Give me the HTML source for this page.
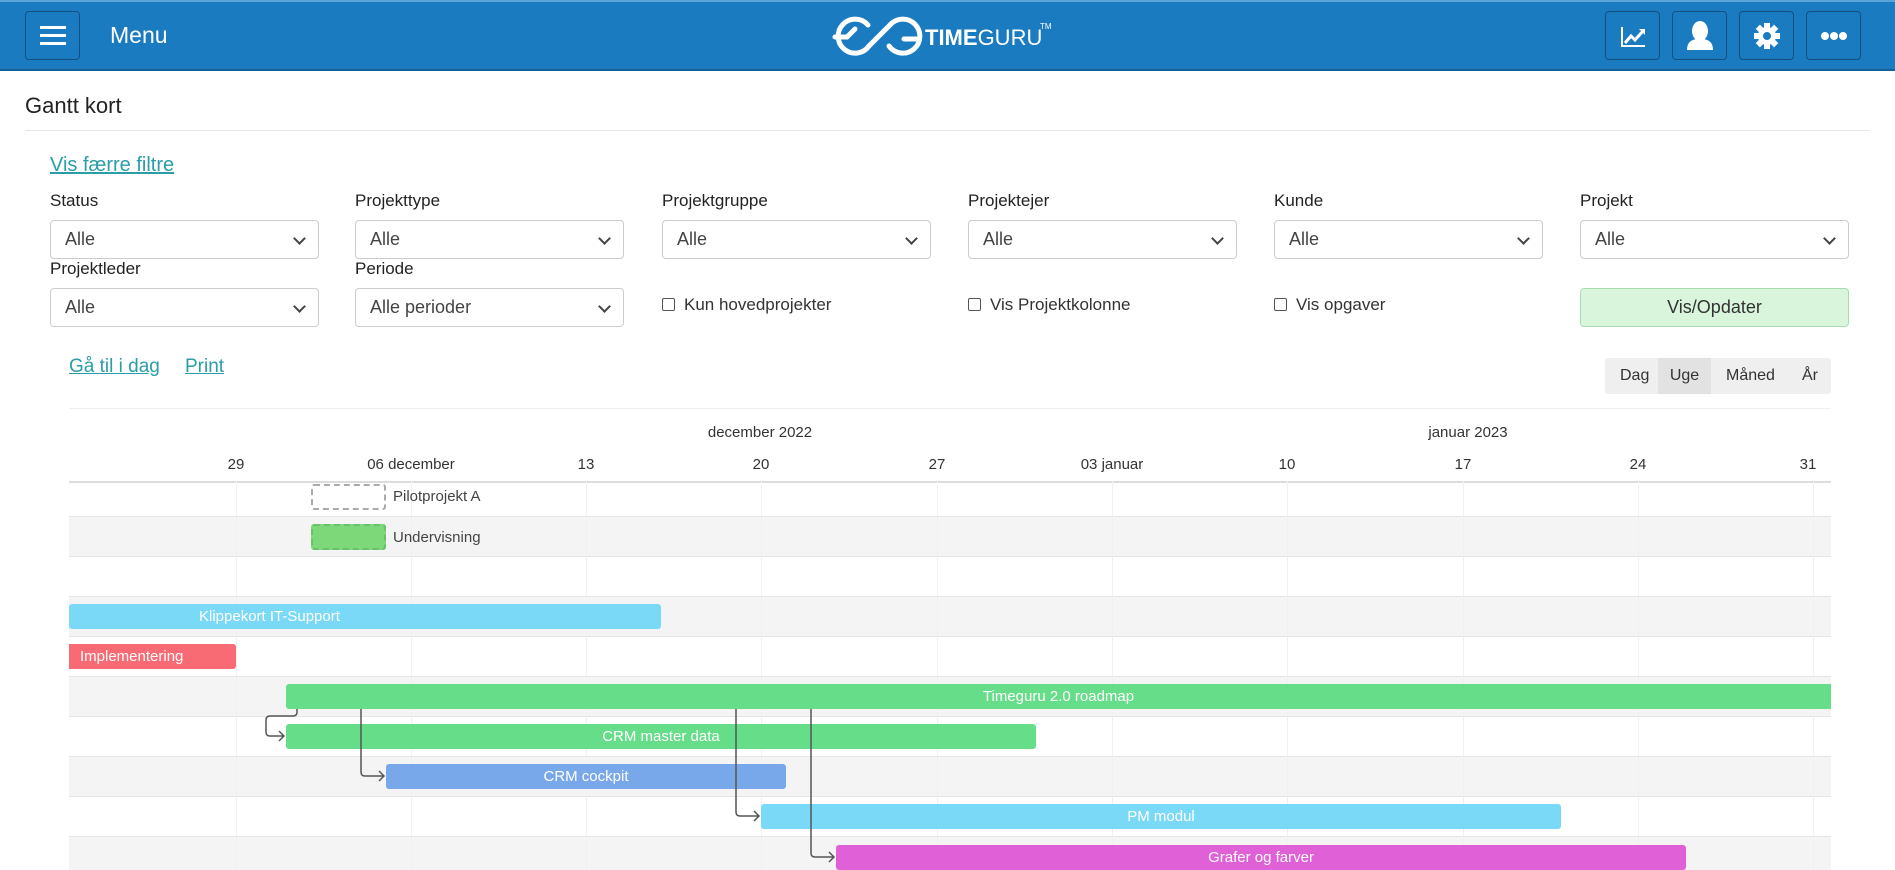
<!DOCTYPE html>
<html><head><meta charset="utf-8"><style>
*{box-sizing:border-box;margin:0;padding:0}
body{width:1895px;height:870px;overflow:hidden;background:#fff;font-family:"Liberation Sans",sans-serif;color:#222;position:relative}
.a{position:absolute}
.hdr{left:0;top:0;width:1895px;height:71px;background:#1b7bc1;border-top:2px solid #5aa6dc;border-bottom:2px solid #16609a}
.btn{position:absolute;top:11px;width:55px;height:49px;border:1px solid #134f7f;border-radius:4px}
.lbl{font-size:17px;color:#222}
.sel{position:absolute;width:269px;height:39px;border:1px solid #ccc;border-radius:4px;font-size:18px;color:#444;padding:8px 14px}
.sel:after{content:"";position:absolute;right:14px;top:13px;width:7px;height:7px;border-right:2px solid #444;border-bottom:2px solid #444;transform:rotate(45deg)}
.cb{position:absolute;font-size:17px;color:#333}
.cb i{display:inline-block;width:13px;height:13px;border:1px solid #555;border-radius:2px;margin-right:9px;vertical-align:-1px}
a{color:#2a9da8;text-decoration:underline}
.row{position:absolute;left:69px;width:1762px;height:40px;border-top:1px solid #e6e6e6}
.g{background:#f4f4f4}
.vl{position:absolute;top:481px;height:389px;width:1px;background:#f0f0f0}
.bar{position:absolute;height:25px;border-radius:3px;color:#fff;font-size:15px;line-height:25px;text-align:center;white-space:nowrap}
.dl{position:absolute;top:456px;font-size:15px;color:#333;transform:translateX(-50%)}
</style></head><body>
<div class="a hdr"></div>
<div class="btn" style="left:25px"><div class="a" style="left:14px;top:14px;width:26px;height:3px;background:#fff;box-shadow:0 8px 0 #fff,0 16px 0 #fff"></div></div>
<div class="a" style="left:110px;top:22px;font-size:23px;color:#fff">Menu</div>
<svg class="a" style="left:829px;top:13px" width="230" height="46" viewBox="0 0 230 46">
<g fill="none" stroke="#fff" stroke-width="5" stroke-linecap="round">
<path d="M39 12 A17 17 0 1 0 40 33"/>
<path d="M6 24 H18 L26 16"/>
<path d="M40 33 L61 12"/>
<path d="M61 12 A17 17 0 1 1 60 33 M75 26 H87"/>
</g>
<text x="96" y="32" fill="#fff" font-size="22" font-weight="bold" font-family="Liberation Sans">TIME<tspan font-weight="normal">GURU</tspan></text>
<text x="211" y="16" fill="#fff" font-size="8" font-family="Liberation Sans">TM</text>
</svg>
<div class="btn" style="left:1605px"><svg width="55" height="49"><path d="M16 15V34H39" stroke="#fff" stroke-width="2" fill="none"/><path d="M19 31L25 24L29 28L37 19" stroke="#fff" stroke-width="3" fill="none"/><path d="M33 17H39V23Z" fill="#fff"/></svg></div>
<div class="btn" style="left:1672px"><svg width="55" height="49"><ellipse cx="27" cy="19" rx="8" ry="10" fill="#fff"/><path d="M14 38Q14 28 24 27H30Q40 28 40 38Z" fill="#fff"/></svg></div>
<div class="btn" style="left:1739px"><svg width="55" height="49"><g transform="translate(27 24)"><circle r="9" fill="#fff"/><g fill="#fff"><rect x="-3" y="-13" width="6" height="26"/><rect x="-3" y="-13" width="6" height="26" transform="rotate(45)"/><rect x="-3" y="-13" width="6" height="26" transform="rotate(90)"/><rect x="-3" y="-13" width="6" height="26" transform="rotate(135)"/></g><circle r="4" fill="#1b7bc1"/></g></svg></div>
<div class="btn" style="left:1806px"><svg width="55" height="49"><circle cx="18" cy="24" r="4" fill="#fff"/><circle cx="27" cy="24" r="4" fill="#fff"/><circle cx="36" cy="24" r="4" fill="#fff"/></svg></div>

<div class="a" style="left:25px;top:93px;font-size:22px;color:#222">Gantt kort</div>
<div class="a" style="left:25px;top:130px;width:1845px;height:1px;background:#e6e6e6"></div>
<div class="a" style="left:50px;top:154px;font-size:20px"><a>Vis færre filtre</a></div>

<div class="a lbl" style="left:50px;top:191px">Status</div>
<div class="a lbl" style="left:355px;top:191px">Projekttype</div>
<div class="a lbl" style="left:662px;top:191px">Projektgruppe</div>
<div class="a lbl" style="left:968px;top:191px">Projektejer</div>
<div class="a lbl" style="left:1274px;top:191px">Kunde</div>
<div class="a lbl" style="left:1580px;top:191px">Projekt</div>
<div class="sel" style="left:50px;top:220px">Alle</div>
<div class="sel" style="left:355px;top:220px">Alle</div>
<div class="sel" style="left:662px;top:220px">Alle</div>
<div class="sel" style="left:968px;top:220px">Alle</div>
<div class="sel" style="left:1274px;top:220px">Alle</div>
<div class="sel" style="left:1580px;top:220px">Alle</div>
<div class="a lbl" style="left:50px;top:259px">Projektleder</div>
<div class="a lbl" style="left:355px;top:259px">Periode</div>
<div class="sel" style="left:50px;top:288px">Alle</div>
<div class="sel" style="left:355px;top:288px">Alle perioder</div>
<div class="cb" style="left:662px;top:295px"><i></i>Kun hovedprojekter</div>
<div class="cb" style="left:968px;top:295px"><i></i>Vis Projektkolonne</div>
<div class="cb" style="left:1274px;top:295px"><i></i>Vis opgaver</div>
<div class="a" style="left:1580px;top:288px;width:269px;height:39px;background:#d9f6dc;border:1px solid #a8dcb0;border-radius:4px;font-size:18px;text-align:center;line-height:37px;color:#333">Vis/Opdater</div>

<div class="a" style="left:69px;top:356px;font-size:19px"><a>Gå til i dag</a></div>
<div class="a" style="left:185px;top:356px;font-size:19px"><a>Print</a></div>
<div class="a" style="left:1605px;top:358px;width:226px;height:36px;background:#efefef;border-radius:3px;font-size:16px;color:#333;line-height:36px">
<span class="a" style="left:15px">Dag</span><span class="a" style="left:53px;width:53px;height:36px;background:#e2e2e2;text-align:center">Uge</span><span class="a" style="left:121px">Måned</span><span class="a" style="left:197px">År</span></div>

<div class="a" style="left:69px;top:408px;width:1762px;height:1px;background:#eee"></div>
<div class="a" style="left:760px;top:424px;font-size:15px;color:#333;transform:translateX(-50%)">december 2022</div>
<div class="a" style="left:1468px;top:424px;font-size:15px;color:#333;transform:translateX(-50%)">januar 2023</div>
<div class="dl" style="left:236px">29</div>
<div class="dl" style="left:411px">06 december</div>
<div class="dl" style="left:586px">13</div>
<div class="dl" style="left:761px">20</div>
<div class="dl" style="left:937px">27</div>
<div class="dl" style="left:1112px">03 januar</div>
<div class="dl" style="left:1287px">10</div>
<div class="dl" style="left:1463px">17</div>
<div class="dl" style="left:1638px">24</div>
<div class="dl" style="left:1808px">31</div>

<div class="row" style="top:481px;height:35px;border-top:2px solid #ddd"></div>
<div class="row g" style="top:516px"></div>
<div class="row" style="top:556px"></div>
<div class="row g" style="top:596px"></div>
<div class="row" style="top:636px"></div>
<div class="row g" style="top:676px"></div>
<div class="row" style="top:716px"></div>
<div class="row g" style="top:756px"></div>
<div class="row" style="top:796px"></div>
<div class="row g" style="top:836px;height:34px"></div>
<div class="vl" style="left:236px"></div><div class="vl" style="left:411px"></div><div class="vl" style="left:586px"></div><div class="vl" style="left:761px"></div><div class="vl" style="left:937px"></div><div class="vl" style="left:1112px"></div><div class="vl" style="left:1287px"></div><div class="vl" style="left:1463px"></div><div class="vl" style="left:1638px"></div><div class="vl" style="left:1813px"></div>

<div class="a" style="left:311px;top:484px;width:75px;height:26px;border:2px dashed #aaa;border-radius:3px"></div>
<div class="a" style="left:393px;top:488px;font-size:15px;color:#444">Pilotprojekt A</div>
<div class="a" style="left:311px;top:524px;width:75px;height:26px;border:2px dashed #6cbf6c;border-radius:3px;background:#7dd87a"></div>
<div class="a" style="left:393px;top:529px;font-size:15px;color:#444">Undervisning</div>

<div class="bar" style="left:69px;top:604px;width:592px;background:#7bd9f8;text-align:left;padding-left:130px">Klippekort IT-Support</div>
<div class="bar" style="left:69px;top:644px;width:167px;background:#f86a74;text-align:left;padding-left:11px;border-radius:0 3px 3px 0">Implementering</div>
<div class="bar" style="left:286px;top:684px;width:1545px;background:#66dd88;border-radius:3px 0 0 3px">Timeguru 2.0 roadmap</div>
<div class="bar" style="left:286px;top:724px;width:750px;background:#66dd88">CRM master data</div>
<div class="bar" style="left:386px;top:764px;width:400px;background:#79a8ea">CRM cockpit</div>
<div class="bar" style="left:761px;top:804px;width:800px;background:#7bd9f8">PM modul</div>
<div class="bar" style="left:836px;top:845px;width:850px;background:#e060d8">Grafer og farver</div>

<svg class="a" style="left:0;top:0" width="1895" height="870"><g fill="none" stroke="#555" stroke-width="1.5">
<path d="M297 709V712Q297 716 293 716H270Q266 716 266 720V732Q266 736 270 736H284M279 731L284 736L279 741"/>
<path d="M361 709V772Q361 776 365 776H384M379 771L384 776L379 781"/>
<path d="M736 709V812Q736 816 740 816H759M754 811L759 816L754 821"/>
<path d="M811 709V853Q811 857 815 857H834M829 852L834 857L829 862"/>
</g></svg>
</body></html>
